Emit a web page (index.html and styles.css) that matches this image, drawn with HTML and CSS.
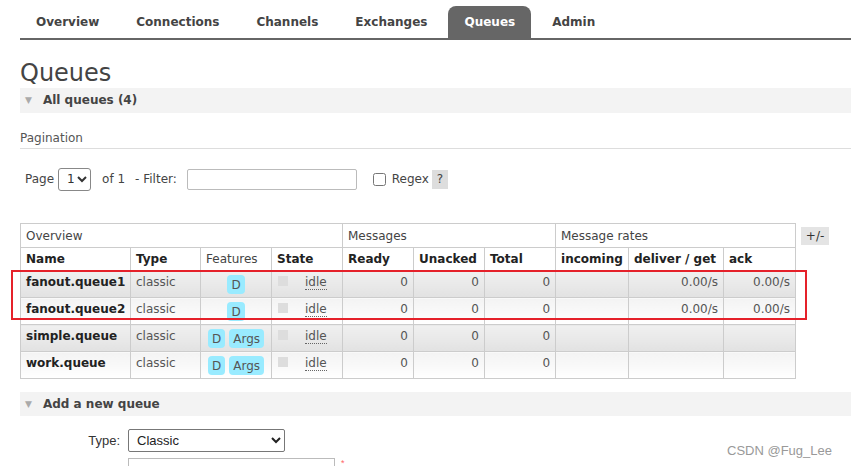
FILE: index.html
```html
<!DOCTYPE html>
<html>
<head>
<meta charset="utf-8">
<link rel="stylesheet" href="styles.css">
</head>
<body>
<div class="page">
  <ul class="tabs">
    <li>Overview</li>
    <li>Connections</li>
    <li>Channels</li>
    <li>Exchanges</li>
    <li class="active">Queues</li>
    <li>Admin</li>
  </ul>
  <h1 class="title">Queues</h1>
  <div class="section-bar"><span class="tri">&#9660;</span>All queues (4)</div>
  <div class="pag-label">Pagination</div>
  <div class="pag-row">
    <span>Page</span>
    <select class="page-select"><option>1</option></select>
    <span class="of">of 1</span>
    <span class="filter-label">- Filter:</span>
    <input class="filter-input" type="text">
    <input class="regex-box" type="checkbox">
    <span class="regex">Regex</span>
    <span class="help">?</span>
  </div>
  <div class="table-row">
    <div class="table-wrap">
      <table class="list">
        <colgroup>
          <col class="c-name"><col class="c-type"><col class="c-feat"><col class="c-state">
          <col class="c-num"><col class="c-num"><col class="c-num">
          <col class="c-inc"><col class="c-del"><col class="c-ack">
        </colgroup>
        <thead>
          <tr class="group">
            <th colspan="4">Overview</th>
            <th colspan="3">Messages</th>
            <th colspan="3">Message rates</th>
          </tr>
          <tr class="cols">
            <th>Name</th><th>Type</th><th class="normal">Features</th><th>State</th>
            <th>Ready</th><th>Unacked</th><th>Total</th>
            <th>incoming</th><th>deliver / get</th><th>ack</th>
          </tr>
        </thead>
        <tbody>
          <tr class="alt1">
            <td class="name">fanout.queue1</td><td class="type">classic</td>
            <td class="feat"><span class="badge">D</span></td>
            <td class="state"><span class="key"></span><span class="idle">idle</span></td>
            <td class="num">0</td><td class="num">0</td><td class="num">0</td>
            <td></td><td class="num">0.00/s</td><td class="num">0.00/s</td>
          </tr>
          <tr class="alt2">
            <td class="name">fanout.queue2</td><td class="type">classic</td>
            <td class="feat"><span class="badge">D</span></td>
            <td class="state"><span class="key"></span><span class="idle">idle</span></td>
            <td class="num">0</td><td class="num">0</td><td class="num">0</td>
            <td></td><td class="num">0.00/s</td><td class="num">0.00/s</td>
          </tr>
          <tr class="alt1">
            <td class="name">simple.queue</td><td class="type">classic</td>
            <td class="feat"><span class="badge">D</span><span class="badge">Args</span></td>
            <td class="state"><span class="key"></span><span class="idle">idle</span></td>
            <td class="num">0</td><td class="num">0</td><td class="num">0</td>
            <td></td><td></td><td></td>
          </tr>
          <tr class="alt2">
            <td class="name">work.queue</td><td class="type">classic</td>
            <td class="feat"><span class="badge">D</span><span class="badge">Args</span></td>
            <td class="state"><span class="key"></span><span class="idle">idle</span></td>
            <td class="num">0</td><td class="num">0</td><td class="num">0</td>
            <td></td><td></td><td></td>
          </tr>
        </tbody>
      </table>
      <div class="highlight"></div>
    </div>
    <span class="toggle">+/-</span>
  </div>
  <div class="section-bar add"><span class="tri">&#9660;</span>Add a new queue</div>
  <div class="form">
    <div class="form-row">
      <label class="form-label">Type:</label>
      <select class="type-select"><option>Classic</option></select>
    </div>
    <div class="form-row second">
      <span class="form-label"></span>
      <input class="name-input" type="text">
      <span class="req">*</span>
    </div>
  </div>
  <div class="watermark">CSDN @Fug_Lee</div>
</div>
</body>
</html>
```

FILE: styles.css
```css
html, body {
  margin: 0;
  padding: 0;
  background: #fff;
  overflow: hidden;
}
body {
  font-family: "DejaVu Sans", Verdana, sans-serif;
  font-size: 12px;
  color: #444;
  width: 851px;
  height: 466px;
}
.page {
  padding-left: 20px;
  position: relative;
  height: 466px;
}
.tabs {
  list-style: none;
  margin: 0;
  padding: 6px 0 0 0;
  display: flex;
  border-bottom: 2px solid #666;
  height: 32px;
}
.tabs li {
  padding: 1px 16px 0 16px;
  margin-right: 5px;
  font-weight: bold;
  font-size: 12px;
  color: #444;
  line-height: 31px;
  height: 31px;
}
.tabs li.active {
  background: #666;
  color: #fff;
  border-radius: 8px 8px 0 0;
}
.title {
  font-size: 24px;
  font-weight: normal;
  color: #444;
  margin: 0;
  padding-top: 19px;
  line-height: 28px;
  height: 28px;
}
.section-bar {
  background: #f3f3f3;
  height: 25px;
  line-height: 25px;
  font-weight: bold;
  font-size: 12px;
  color: #444;
  padding-left: 5px;
  margin-top: 1px;
}
.tri {
  color: #aaa;
  font-size: 9px;
  margin-right: 11px;
  vertical-align: 1px;
}
.pag-label {
  margin-top: 17px;
  height: 18px;
  line-height: 16px;
  border-bottom: 1px solid #ddd;
  color: #555;
  font-size: 12px;
}
.pag-row {
  display: flex;
  align-items: center;
  height: 24px;
  margin-top: 18px;
  padding-left: 5px;
  font-size: 12px;
  color: #444;
}
.page-select {
  margin-left: 4px;
  width: 33px;
  height: 23px;
  font-family: "DejaVu Sans", sans-serif;
  font-size: 12px;
  border: 1px solid #888;
  border-radius: 3px;
  background: #fff;
  color: #333;
  padding: 0 0 0 4px;
}
.of { margin-left: 11px; }
.filter-label { margin-left: 10px; }
.filter-input {
  margin: 0 0 0 10px;
  width: 170px;
  height: 21px;
  box-sizing: border-box;
  border: 1px solid #bbb;
  border-radius: 2px;
}
.regex-box {
  margin: 0 0 0 16px;
  width: 13px;
  height: 13px;
}
.regex { margin-left: 6px; }
.help {
  margin-left: 3px;
  background: #ddd;
  width: 16px;
  height: 19px;
  line-height: 19px;
  text-align: center;
  color: #444;
}
.table-row {
  display: flex;
  align-items: flex-start;
  margin-top: 32px;
}
.table-wrap {
  position: relative;
}
.list {
  border-collapse: collapse;
  table-layout: fixed;
  width: 775px;
  font-size: 12px;
}
.c-name { width: 110px; }
.c-type { width: 70px; }
.c-feat { width: 71px; }
.c-state { width: 71px; }
.c-num { width: 71px; }
.c-inc { width: 73px; }
.c-del { width: 95px; }
.c-ack { width: 72px; }
.list th, .list td {
  border: 1px solid #ccc;
  padding: 0 5px;
  white-space: nowrap;
  overflow: hidden;
}
.list th {
  text-align: left;
  background: #fff;
  color: #222;
}
.list tr.group th {
  font-weight: normal;
  color: #444;
  height: 23px;
}
.list tr.cols th {
  font-weight: bold;
  height: 22px;
}
.list tr.cols th.normal {
  font-weight: normal;
  color: #444;
}
.list tbody td {
  height: 22px;
  padding-top: 4px;
  vertical-align: top;
  line-height: 14px;
  color: #555;
}
.list tr.alt1 td {
  background: linear-gradient(#f0f0f0, #e2e2e2);
}
.list tr.alt2 td {
  background: linear-gradient(#f3f3f3, #fff);
}
.list td.name {
  font-weight: bold;
  color: #222;
}
.list td.num {
  text-align: right;
}
.list td.feat {
  text-align: center;
  padding-left: 0;
  padding-right: 0;
  padding-top: 4px;
}
.badge {
  display: inline-block;
  background: #99ebff;
  color: #555;
  border-radius: 4px;
  padding: 0 4px;
  height: 19px;
  line-height: 21px;
  margin: 0 2px;
  vertical-align: top;
}
.list td.state {
  padding-left: 6px;
}
.key {
  display: inline-block;
  width: 10px;
  height: 10px;
  background: #ddd;
  vertical-align: 0;
}
.idle {
  margin-left: 17px;
  border-bottom: 1px dotted #666;
}
.highlight {
  position: absolute;
  left: -9px;
  top: 47px;
  width: 792px;
  height: 46px;
  border: 2px solid #e5212a;
}
.toggle {
  margin-left: 5px;
  margin-top: 4px;
  background: #e4e4e4;
  width: 28px;
  height: 18px;
  line-height: 18px;
  text-align: center;
  font-size: 12px;
  color: #333;
}
.section-bar.add {
  margin-top: 13px;
  height: 24px;
  line-height: 24px;
}
.form {
  padding-top: 13px;
  font-family: "Liberation Sans", Arial, sans-serif;
  font-size: 13px;
  color: #333;
}
.form-row {
  display: flex;
  align-items: center;
}
.form-label {
  width: 100px;
  text-align: right;
  padding-right: 8px;
}
.type-select {
  width: 157px;
  height: 23px;
  font-family: "Liberation Sans", Arial, sans-serif;
  font-size: 13px;
  border: 1px solid #777;
  border-radius: 2px;
  background: #fff;
  color: #222;
  padding-left: 4px;
}
.form-row.second {
  margin-top: 6px;
  align-items: flex-start;
}
.name-input {
  margin: 0;
  width: 207px;
  height: 22px;
  box-sizing: border-box;
  border: 1px solid #bbb;
}
.req {
  color: #f66;
  font-size: 9px;
  margin-left: 6px;
}
.watermark {
  position: absolute;
  left: 727px;
  top: 443px;
  font-family: "Liberation Sans", Arial, sans-serif;
  font-size: 13px;
  color: #999;
}
```
